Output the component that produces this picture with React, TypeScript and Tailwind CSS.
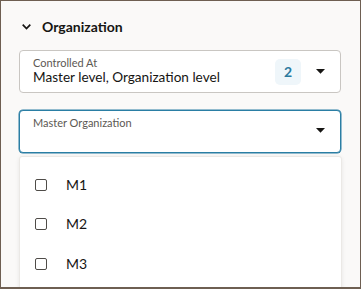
import React from "react";

const Caret = () => (
  <svg width="9" height="5" viewBox="0 0 9 5" className="shrink-0 block">
    <path d="M0 0 L9 0 L4.5 4.8 Z" fill="#161513" />
  </svg>
);

const Box = () => (
  <span className="block w-[12px] h-[12px] rounded-[2px] border-[1.5px] border-[#4f4c48] bg-white shrink-0" />
);

export default function App() {
  const items = ["M1", "M2", "M3"];
  return (
    <div
      className="w-[361px] h-[289px] overflow-hidden bg-[#faf9f8] border border-b-2 border-[#6e5f52] text-[#161513] flex flex-col"
      style={{ fontFamily: 'Lato, "Noto Sans", sans-serif' }}
    >
      <div className="shrink-0 flex items-center h-[20px] mt-[16px] pl-[21px] gap-[11px]">
        <svg width="9" height="6" viewBox="0 0 9 6" className="shrink-0 block">
          <path d="M0.7 0.7 L4.5 4.6 L8.3 0.7" fill="none" stroke="#161513" strokeWidth="1.7" />
        </svg>
        <span className="text-[14px] font-bold leading-none">Organization</span>
      </div>

      <div className="shrink-0 mt-[13px] ml-[18px] w-[322px] h-[43px] rounded-[4px] border border-[#c9c6c2] bg-white flex items-center pl-[13px] pr-[15px]">
        <div className="flex-1 flex flex-col self-start pt-[6px]">
          <span className="text-[11px] leading-[12px] text-[#5c5853]">Controlled At</span>
          <span className="text-[13.6px] leading-[17px] text-[#161513]">Master level, Organization level</span>
        </div>
        <span className="w-[26px] h-[26px] rounded-[5px] bg-[#eff6fa] text-[#2b7a9f] text-[14px] font-bold flex items-center justify-center mr-[15px]">
          2
        </span>
        <Caret />
      </div>

      <div className="shrink-0 mt-[17px] ml-[18px] w-[322px] h-[43px] rounded-[4px] border border-[#2a7ea4] shadow-[0_0_0_0.5px_#2a7ea4] bg-white flex pl-[13px] pr-[15px]">
        <div className="flex-1 pt-[6px]">
          <span className="block text-[11px] leading-[12px] text-[#5c5853]">Master Organization</span>
        </div>
        <div className="pt-[17px]">
          <Caret />
        </div>
      </div>

      <div className="shrink-0 mt-[3px] ml-[18px] w-[323px] h-[200px] bg-white border border-[#ebe9e6] rounded-t-[3px] shadow-[0_1px_4px_rgba(0,0,0,0.08)] pt-[8px] flex flex-col">
        {items.map((m) => (
          <div key={m} className="shrink-0 flex items-center h-[39.5px] pl-[15px] gap-[19px]">
            <Box />
            <span className="text-[14px] leading-none text-[#161513]">{m}</span>
          </div>
        ))}
      </div>
    </div>
  );
}
